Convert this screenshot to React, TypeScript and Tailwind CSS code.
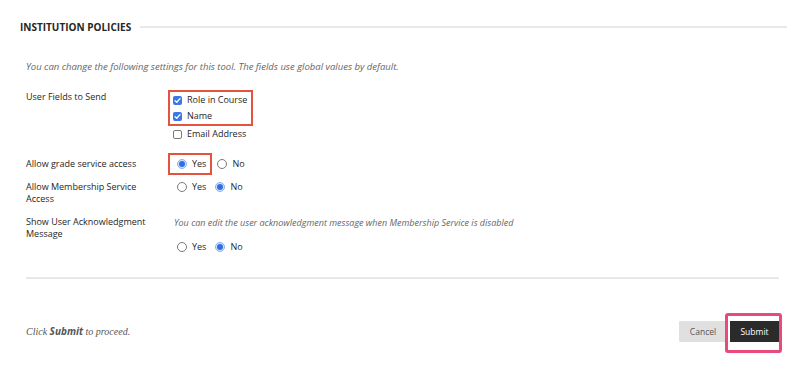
import React from 'react';

function Checkbox({ checked, label }: { checked?: boolean; label: string }) {
  return (
    <div className="flex items-center h-[16px] gap-[5px]">
      {checked ? (
        <span className="w-[9px] h-[9px] rounded-[2px] bg-[#3b78e7] flex items-center justify-center">
          <svg width="7" height="7" viewBox="0 0 8 8">
            <path d="M1.3 4.2 L3.2 6 L6.8 1.8" stroke="white" strokeWidth="1.5" fill="none" strokeLinecap="round" strokeLinejoin="round" />
          </svg>
        </span>
      ) : (
        <span className="w-[9px] h-[9px] rounded-[2px] border border-[#7a7a7a] bg-white" />
      )}
      <span>{label}</span>
    </div>
  );
}

function Radio({ checked, label }: { checked?: boolean; label: string }) {
  return (
    <div className="flex items-center gap-[5px]">
      {checked ? (
        <span className="w-[10px] h-[10px] rounded-full border border-[#8fb0ef] bg-[#d6e3fb] flex items-center justify-center">
          <span className="w-[6px] h-[6px] rounded-full bg-[#2e6fe6]" />
        </span>
      ) : (
        <span className="w-[10px] h-[10px] rounded-full border border-[#7a7a7a] bg-white" />
      )}
      <span>{label}</span>
    </div>
  );
}

function YesNo({ yes }: { yes: boolean }) {
  return (
    <div className="flex items-center gap-[9px]">
      <Radio checked={yes} label="Yes" />
      <Radio checked={!yes} label="No" />
    </div>
  );
}

export default function App() {
  return (
    <div className="w-[803px] h-[386px] bg-white font-['Open_Sans',sans-serif] text-[9px] leading-[12px] text-[#262626]">
      <div className="flex items-center pt-[20px] pl-[20px] pr-[16px]">
        <h2 className="font-bold text-[10px] leading-[14px] text-[#262626]">INSTITUTION POLICIES</h2>
        <div className="flex-1 h-[2px] bg-[#e8e8e8] ml-[9px]" />
      </div>

      <div className="pl-[26px] pr-[24px]">
        <p className="mt-[27px] italic text-[9.5px] text-[#666]">
          You can change the following settings for this tool. The fields use global values by default.
        </p>

        <div className="flex mt-[17px]">
          <div className="w-[142px] pt-[1px]">User Fields to Send</div>
          <div>
            <div className="border-2 border-[#e5533f] px-[3px] w-[85px]">
              <Checkbox checked label="Role in Course" />
              <Checkbox checked label="Name" />
            </div>
            <div className="px-[5px]">
              <Checkbox label="Email Address" />
            </div>
          </div>
        </div>

        <div className="flex mt-[11px] items-center">
          <div className="w-[142px]">Allow grade service access</div>
          <div className="flex items-center gap-[5px]">
            <div className="border-2 border-[#e5533f] h-[22px] pl-[7px] pr-[4px] flex items-center">
              <Radio checked label="Yes" />
            </div>
            <Radio label="No" />
          </div>
        </div>

        <div className="flex mt-[6px]">
          <div className="w-[142px]">
            Allow Membership Service
            <br />
            Access
          </div>
          <div className="pl-[9px]">
            <YesNo yes={false} />
          </div>
        </div>

        <div className="flex mt-[11px]">
          <div className="w-[142px]">
            Show User Acknowledgment
            <br />
            Message
          </div>
          <div className="pl-[6px]">
            <p className="italic text-[9px] text-[#666] mt-[1px]">
              You can edit the user acknowledgment message when Membership Service is disabled
            </p>
            <div className="pl-[3px] mt-[12px]">
              <YesNo yes={false} />
            </div>
          </div>
        </div>

        <div className="h-[2px] bg-[#e8e8e8] mt-[24px]" />

        <div className="flex items-center justify-between mt-[42px]">
          <p className="font-['Liberation_Serif',serif] italic text-[10px] text-[#555]">
            Click <span className="font-['Open_Sans',sans-serif] font-bold">Submit</span> to proceed.
          </p>
          <div className="flex items-center gap-[3px]">
            <button className="h-[21px] w-[48px] bg-[#e0e0e0] text-[#555] text-[8.5px] rounded-[1px]">Cancel</button>
            <div className="relative">
              <button className="h-[21px] w-[49px] bg-[#2b2b2b] text-white text-[8.5px] block">Submit</button>
              <div className="absolute -left-[5px] -right-[3px] -top-[8px] -bottom-[11px] border-[3px] border-[#e84a7a] rounded-[3px]" />
            </div>
          </div>
        </div>
      </div>
    </div>
  );
}
